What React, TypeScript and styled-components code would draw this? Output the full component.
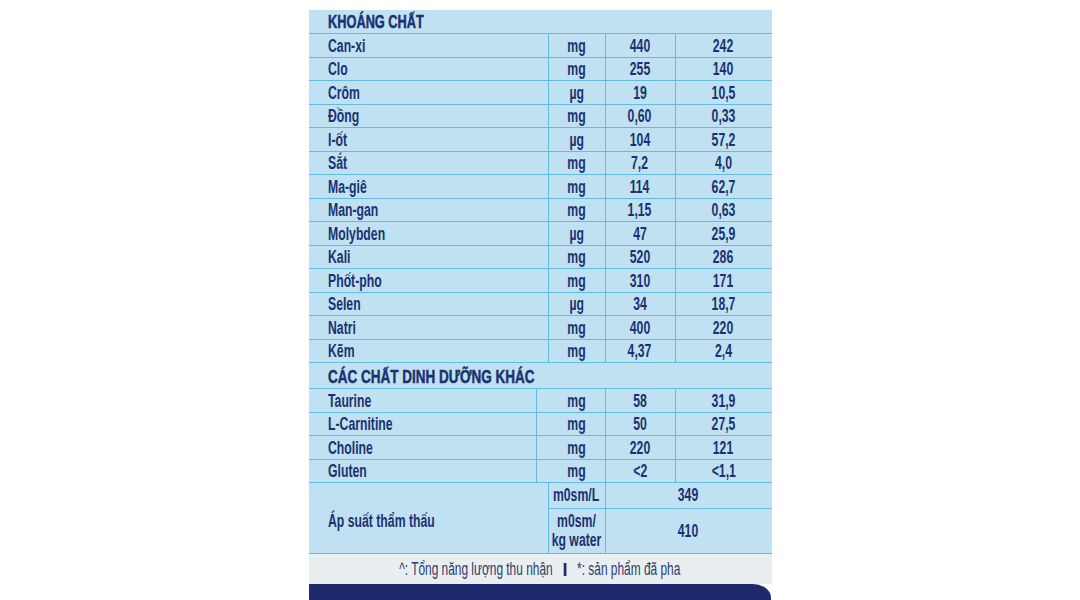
import React from "react";
import styled, { createGlobalStyle } from "styled-components";

const GlobalStyle = createGlobalStyle`
  html, body {
    margin: 0;
    padding: 0;
    background: #ffffff;
  }
  body {
    width: 1080px;
    height: 600px;
    overflow: hidden;
    font-family: "Liberation Sans Narrow", "Liberation Sans", Arial, sans-serif;
  }
`;

const colors = {
  panel: "#bfe1f1",
  line: "#62bbe0",
  text: "#1d3170",
  strip: "#e9eff1",
  navy: "#1f2a6d",
};

const Page = styled.div`
  height: 600px;
  display: flex;
  justify-content: center;
  padding-top: 10px;
  box-sizing: border-box;
`;

const Sheet = styled.div`
  width: 463px;
  display: flex;
  flex-direction: column;
`;

const Label = styled.div`
  background: ${colors.panel};
  color: ${colors.text};
  display: flex;
  flex-direction: column;
`;

const SectionTitle = styled.div<{ tall?: boolean }>`
  height: ${({ tall }) => (tall ? "25px" : "23px")};
  border-bottom: 1px solid ${colors.line};
  padding-left: 19px;
  display: flex;
  align-items: flex-end;
  font-weight: 700;
  font-size: 18px;
  line-height: 21px;
  -webkit-text-stroke: 0.5px ${colors.text};
`;

const Row = styled.div<{ cols: string }>`
  display: grid;
  grid-template-columns: ${({ cols }) => cols};
  height: 23.5px;
`;

const Cell = styled.div<{ align?: "left" | "center"; first?: boolean; shift?: number }>`
  border-bottom: 1px solid ${colors.line};
  border-left: ${({ first }) => (first ? "none" : `1px solid ${colors.line}`)};
  display: flex;
  align-items: flex-end;
  justify-content: ${({ align }) => (align === "left" ? "flex-start" : "center")};
  padding-left: ${({ align, shift }) => (align === "left" ? "19px" : `${shift || 0}px`)};
  font-size: 18px;
  font-weight: 700;
  line-height: 21px;
  overflow: hidden;
`;

const Txt = styled.span<{ origin?: string; squeeze?: number }>`
  display: inline-block;
  white-space: nowrap;
  transform: scaleX(${({ squeeze }) => squeeze || 0.68});
  transform-origin: ${({ origin }) => origin || "center"};
`;

const OsmGrid = styled.div`
  display: grid;
  grid-template-columns: 239px 57px 167px;
  grid-template-rows: 26px 44px;
`;

const OsmName = styled.div`
  grid-row: 1 / span 2;
  display: flex;
  align-items: center;
  padding-left: 19px;
  padding-top: 6px;
  font-size: 18px;
  font-weight: 700;
`;

const OsmCell = styled.div<{ last?: boolean }>`
  border-left: 1px solid ${colors.line};
  border-bottom: ${({ last }) => (last ? "none" : `1px solid ${colors.line}`)};
  display: flex;
  align-items: center;
  justify-content: center;
  text-align: center;
  font-size: 18px;
  font-weight: 700;
  line-height: 19px;
`;

const BottomLine = styled.div`
  border-bottom: 1px solid ${colors.line};
`;

const Strip = styled.div`
  background: ${colors.strip};
  height: 31px;
  display: flex;
  align-items: center;
  justify-content: center;
  color: #2b3b6e;
  font-size: 17.5px;
`;

const Divider = styled.span`
  display: inline-block;
  width: 4px;
  height: 13px;
  background: ${colors.navy};
  margin: 0 16px;
  vertical-align: -1px;
`;

const NavyBar = styled.div`
  background: ${colors.navy};
  height: 16px;
  margin-right: 1px;
  border-top-right-radius: 18px 14px;
`;

type Item = [string, string, string, string];

const minerals: Item[] = [
  ["Can-xi", "mg", "440", "242"],
  ["Clo", "mg", "255", "140"],
  ["Crôm", "µg", "19", "10,5"],
  ["Đồng", "mg", "0,60", "0,33"],
  ["I-ốt", "µg", "104", "57,2"],
  ["Sắt", "mg", "7,2", "4,0"],
  ["Ma-giê", "mg", "114", "62,7"],
  ["Man-gan", "mg", "1,15", "0,63"],
  ["Molybden", "µg", "47", "25,9"],
  ["Kali", "mg", "520", "286"],
  ["Phốt-pho", "mg", "310", "171"],
  ["Selen", "µg", "34", "18,7"],
  ["Natri", "mg", "400", "220"],
  ["Kẽm", "mg", "4,37", "2,4"],
];

const others: Item[] = [
  ["Taurine", "mg", "58", "31,9"],
  ["L-Carnitine", "mg", "50", "27,5"],
  ["Choline", "mg", "220", "121"],
  ["Gluten", "mg", "<2", "<1,1"],
];

const TableRows = ({ items, cols, unitShift }: { items: Item[]; cols: string; unitShift: number }) => (
  <>
    {items.map(([name, unit, a, b]) => (
      <Row key={name} cols={cols}>
        <Cell first align="left">
          <Txt origin="left">{name}</Txt>
        </Cell>
        <Cell shift={unitShift}>
          <Txt>{unit}</Txt>
        </Cell>
        <Cell>
          <Txt>{a}</Txt>
        </Cell>
        <Cell>
          <Txt>{b}</Txt>
        </Cell>
      </Row>
    ))}
  </>
);

export default function App() {
  return (
    <>
      <GlobalStyle />
      <Page>
        <Sheet>
          <Label>
            <SectionTitle>
              <Txt origin="left" squeeze={0.71}>KHOÁNG CHẤT</Txt>
            </SectionTitle>
            <TableRows items={minerals} cols="239px 57px 70px 97px" unitShift={0} />
            <SectionTitle tall>
              <Txt origin="left" squeeze={0.75}>CÁC CHẤT DINH DƯỠNG KHÁC</Txt>
            </SectionTitle>
            <TableRows items={others} cols="227px 69px 70px 97px" unitShift={12} />
            <OsmGrid>
              <OsmName>
                <Txt origin="left">Áp suất thẩm thấu</Txt>
              </OsmName>
              <OsmCell>
                <Txt>m0sm/L</Txt>
              </OsmCell>
              <OsmCell>
                <Txt>349</Txt>
              </OsmCell>
              <OsmCell last>
                <Txt>
                  m0sm/
                  <br />
                  kg water
                </Txt>
              </OsmCell>
              <OsmCell last>
                <Txt>410</Txt>
              </OsmCell>
            </OsmGrid>
            <BottomLine />
          </Label>
          <Strip>
            <Txt>
              ^: Tổng năng lượng thu nhận
              <Divider />
              *: sản phẩm đã pha
            </Txt>
          </Strip>
          <NavyBar />
        </Sheet>
      </Page>
    </>
  );
}
